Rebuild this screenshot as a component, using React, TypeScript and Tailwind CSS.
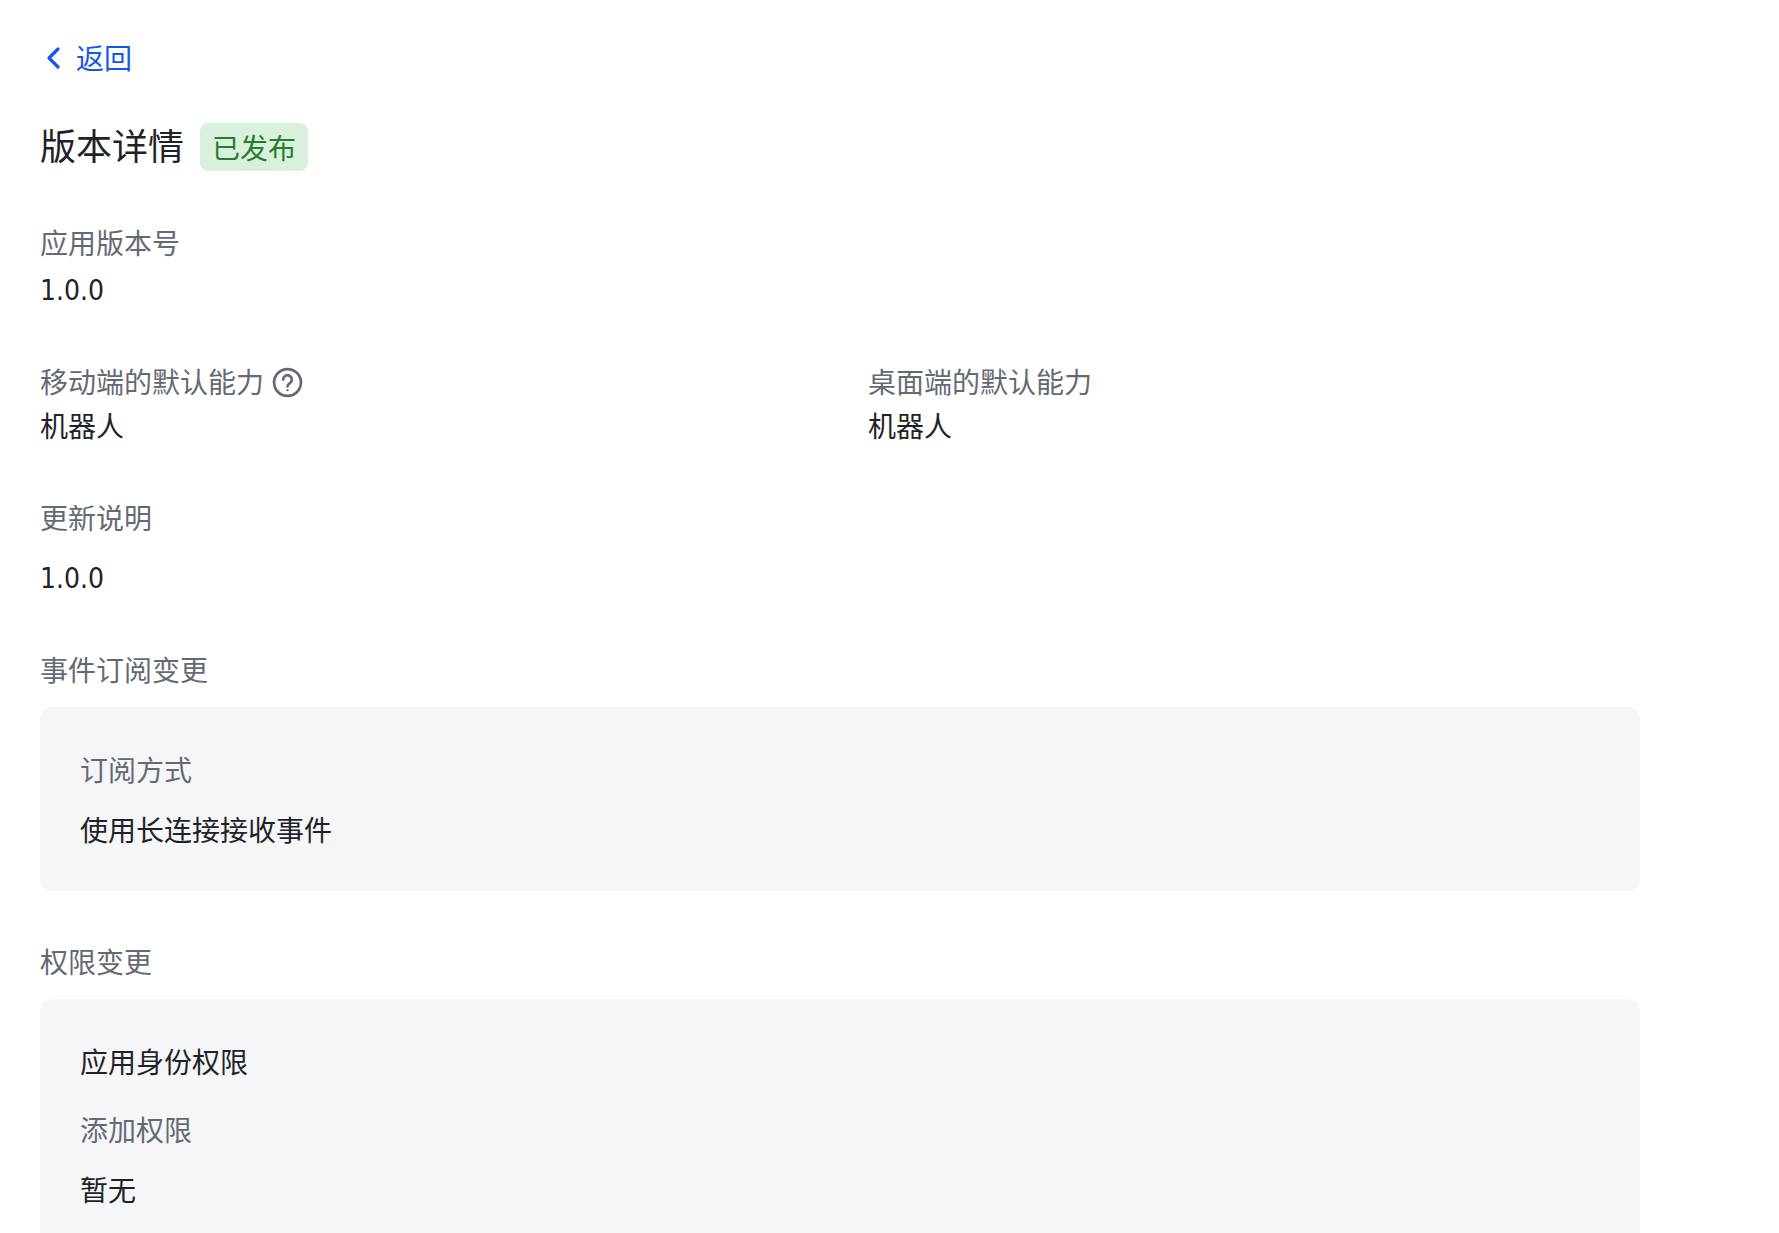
const FONT = "font-['Inter','Noto_Sans_CJK_SC',sans-serif]";
const DIGITS = "font-['DejaVu_Sans_Condensed','Noto_Sans_CJK_SC',sans-serif]";

function Label({ children }: { children: React.ReactNode }) {
  return <div className="text-[28px] leading-[40px] text-[#646a73]">{children}</div>;
}

function Value({ children, className = "" }: { children: React.ReactNode; className?: string }) {
  return <div className={`text-[28px] leading-[40px] text-[#1f2329] ${className}`}>{children}</div>;
}

function HelpIcon() {
  return (
    <svg viewBox="0 0 30 30" className="mb-[2px] h-[31px] w-[31px]" fill="none" stroke="#646a73" strokeWidth="2.6" strokeLinecap="round">
      <circle cx="15" cy="15" r="13" />
      <path d="M10.8 12.2a4.2 4.2 0 1 1 6.6 3.4c-1.4 1-2.4 1.7-2.4 3.2" />
      <circle cx="15" cy="22.4" r="1.1" fill="#646a73" stroke="none" />
    </svg>
  );
}

export default function App() {
  return (
    <div className={`h-screen overflow-hidden bg-white pl-10 pr-[139px] pt-[39px] ${FONT}`}>
      <a className="flex h-10 items-center text-[28px] leading-[40px] text-[#1456f0]">
        <svg viewBox="0 0 16 24" className="mb-[2px] ml-[5px] mr-[15px] h-6 w-4" fill="none" stroke="currentColor" strokeWidth="3.2" strokeLinecap="round" strokeLinejoin="round">
          <path d="M13 3 4 12l9 9" />
        </svg>
        返回
      </a>

      <div className="mt-11 flex h-12 items-center">
        <h1 className="text-[36px] font-normal leading-[48px] text-[#1f2329]">版本详情</h1>
        <span className="ml-4 rounded-lg bg-[#d9f1dc] px-3 pt-1 text-[28px] leading-[44px] text-[#2a7a2f]">已发布</span>
      </div>

      <div className="mt-[53px]">
        <Label>应用版本号</Label>
        <div className="mt-[7px]">
          <Value className={DIGITS}>1.0.0</Value>
        </div>
      </div>

      <div className="mt-[52px] grid grid-cols-2 gap-x-14">
        <div>
          <div className="flex items-center gap-2">
            <Label>移动端的默认能力</Label>
            <HelpIcon />
          </div>
          <div className="mt-1">
            <Value>机器人</Value>
          </div>
        </div>
        <div>
          <Label>桌面端的默认能力</Label>
          <div className="mt-1">
            <Value>机器人</Value>
          </div>
        </div>
      </div>

      <div className="mt-[52px]">
        <Label>更新说明</Label>
        <div className="mt-5">
          <Value className={DIGITS}>1.0.0</Value>
        </div>
      </div>

      <div className="mt-[52px]">
        <Label>事件订阅变更</Label>
        <div className="mt-4 rounded-xl bg-[#f5f6f7] px-10 pb-10 pt-11">
          <Label>订阅方式</Label>
          <div className="mt-5">
            <Value>使用长连接接收事件</Value>
          </div>
        </div>
      </div>

      <div className="mt-[52px]">
        <Label>权限变更</Label>
        <div className="mt-4 rounded-xl bg-[#f5f6f7] px-10 pb-10 pt-11">
          <Value>应用身份权限</Value>
          <div className="mt-7">
            <Label>添加权限</Label>
          </div>
          <div className="mt-5">
            <Value>暂无</Value>
          </div>
          <div className="h-40" />
        </div>
      </div>
    </div>
  );
}
